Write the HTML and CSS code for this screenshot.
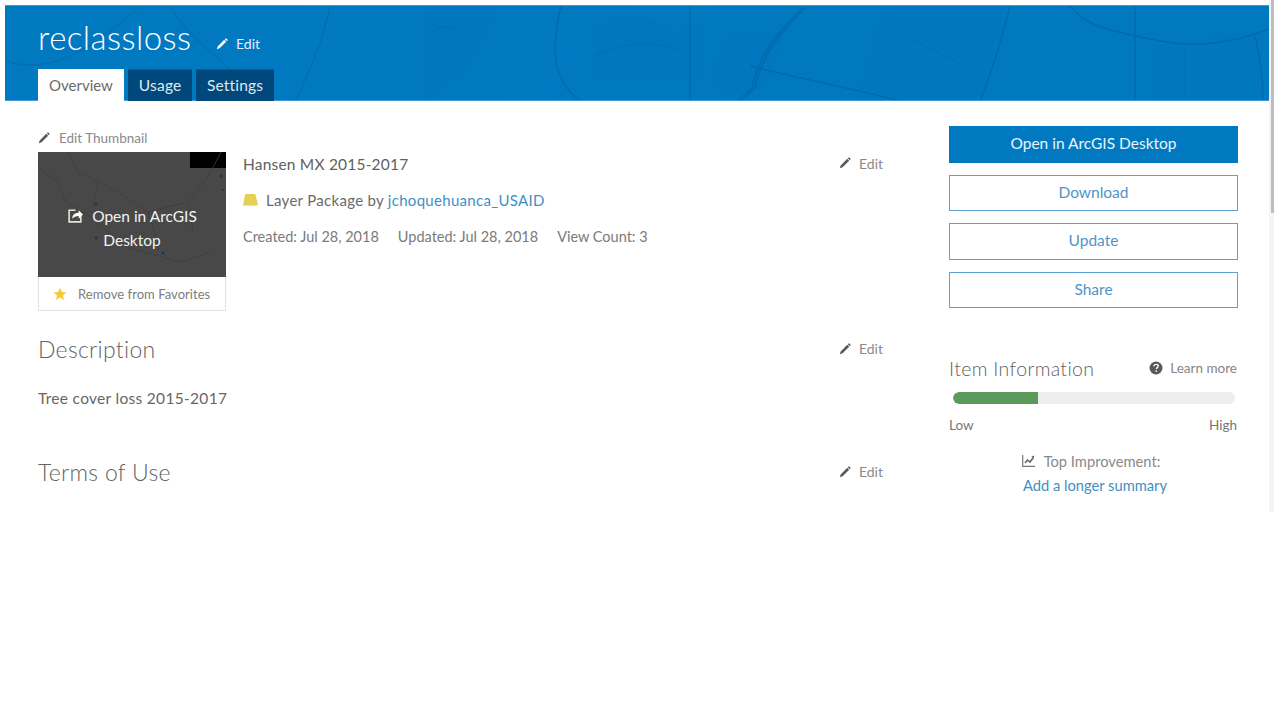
FILE: index.html
```html
<!DOCTYPE html>
<html lang="en">
<head>
<meta charset="utf-8">
<title>reclassloss</title>
<link rel="stylesheet" href="styles.css">
</head>
<body>
<svg class="defs" width="0" height="0" aria-hidden="true">
  <symbol id="pencil" viewBox="0 0 14 14"><path d="M1 13l.9-3.200L9.600 2.100l2.300 2.300-7.700 7.700zM10.300 1.400l.8-.7c.4-.3.8-.3 1.100 0l1.100 1.100c.3.3.3.8 0 1.100l-.7.8z" fill="currentColor"/></symbol>
</svg>
<div class="screen">
  <div class="page">
    <header class="banner">
      <svg class="map-lines" viewBox="0 0 1264 95" preserveAspectRatio="none" aria-hidden="true">
        <g fill="#006fb3" fill-opacity=".14">
          <path d="M590 20c40-12 90-8 110 0v50c-40 0-90 10-110 0zM735 30c20-10 40-5 45 5l-25 50h-45l5-50zM420 0h75l-30 60-45 35z"/>
          <path d="M880 0h120l-30 95H850zM1150 40l105-15v70h-105z"/>
        </g>
        <g fill="#0a86cc" fill-opacity=".12">
          <path d="M625 0h85v18l-45 8zM300 0h60l-30 60h-50zM520 20c20-5 40 0 50 20l-30 55h-40z"/>
        </g>
        <g fill="none" stroke="#00558f" stroke-opacity=".4">
          <path d="M0 55C50 70 90 40 135 0M165 0c15 30 60 60 95 95M290 95c20-40 30-70 35-95" stroke-width="1"/>
          <path d="M556 0c-10 40-10 75 20 95M685 0v95" stroke-width="1.400"/>
          <path d="M800 2c-25 25-45 50-50 80l-15 13M797 2c-25 25-45 50-50 80l-15 13" stroke-width="1.400"/>
          <path d="M745 60c40 10 90 20 150 35M1005 0c-10 40-20 70-30 95M1065 0c15 20 40 25 90 35 40 8 80 0 109-12M1130 0v95M1250 30c5 20 8 40 8 65" stroke-width="1.400"/>
          <path d="M420 30c20-15 30-10 40 0M590 50c30-15 60-15 90-5M900 30l60 30M1180 40v55" stroke-opacity=".2"/>
        </g>
      </svg>
      <div class="title-row">
        <h1 class="title">reclassloss</h1>
        <a class="edit edit-light"><svg class="pencil"><use href="#pencil"/></svg>Edit</a>
      </div>
      <nav class="tabs">
        <a class="tab tab-active">Overview</a>
        <a class="tab">Usage</a>
        <a class="tab">Settings</a>
      </nav>
    </header>
    <div class="content">
      <main class="main">
        <section class="summary">
          <div class="thumb-col">
            <a class="edit-thumb"><svg class="pencil"><use href="#pencil"/></svg>Edit Thumbnail</a>
            <div class="thumb-card">
              <div class="thumb">
                <svg class="thumb-map" viewBox="0 0 188 125" aria-hidden="true">
                  <rect x="152" y="0" width="36" height="16" fill="#000"/>
                  <g fill="none" stroke="#3d3d3d" stroke-width=".8">
                    <path d="M0 15l20 15 8 20 25 15 35 30 55 15 30-10M30 0l10 20 20 10 20 10 30 20 40-10 20-25 13-25"/>
                    <path d="M60 30l-5 25M110 60l10 30M150 50l5 30"/>
                  </g>
                  <g fill="#1d3550">
                    <circle cx="58" cy="52" r="1.500"/><circle cx="62" cy="60" r="1.500"/><circle cx="58" cy="86" r="1.500"/><circle cx="125" cy="101" r="1.200"/><circle cx="183" cy="24" r="1.500"/><circle cx="185" cy="38" r="1"/>
                  </g>
                </svg>
                <a class="thumb-label">
                  <svg class="open-icon" viewBox="0 0 16 16" aria-hidden="true"><path d="M8 3H2v11h11V8" fill="none" stroke="#e8e4d8" stroke-width="1.500"/><path d="M5 11c0-3.500 2.500-5.500 6-5.500V3l4 4-4 4V8.500c-2.500 0-4.500.8-6 2.500z" fill="#fff"/></svg>Open in ArcGIS<br>Desktop
                </a>
              </div>
              <a class="favorite"><svg class="star" viewBox="0 0 14 14" aria-hidden="true"><path d="M7 .8l1.900 4.200 4.500.4-3.400 3 1 4.500L7 10.600l-4 2.300 1-4.500-3.400-3 4.500-.4z" fill="#f7c933"/></svg>Remove from Favorites</a>
            </div>
          </div>
          <div class="meta">
            <div class="meta-title">Hansen MX 2015-2017</div>
            <div class="meta-type"><svg class="pkg" viewBox="0 0 15 12" aria-hidden="true"><path d="M2 .5C2.200.2 2.500 0 3 0h8.500c.5 0 .8.300 1 .8L15 11c-5 1.300-10 .5-15 .5z" fill="#e6cf55"/></svg>Layer Package by <a class="link">jchoquehuanca_USAID</a></div>
            <div class="meta-dates"><span>Created: Jul 28, 2018</span><span>Updated: Jul 28, 2018</span><span>View Count: 3</span></div>
          </div>
          <a class="edit edit-summary"><svg class="pencil"><use href="#pencil"/></svg>Edit</a>
        </section>
        <section class="block block-desc">
          <div class="block-head"><h2>Description</h2><a class="edit"><svg class="pencil"><use href="#pencil"/></svg>Edit</a></div>
          <p class="desc">Tree cover loss 2015-2017</p>
        </section>
        <section class="block block-terms">
          <div class="block-head"><h2>Terms of Use</h2><a class="edit"><svg class="pencil"><use href="#pencil"/></svg>Edit</a></div>
        </section>
      </main>
      <aside class="side">
        <a class="btn btn-primary">Open in ArcGIS Desktop</a>
        <a class="btn">Download</a>
        <a class="btn">Update</a>
        <a class="btn">Share</a>
        <div class="info">
          <div class="info-head"><h3>Item Information</h3><a class="learn"><svg class="help" viewBox="0 0 14 14" aria-hidden="true"><circle cx="7" cy="7" r="6.500" fill="#595959"/><path d="M4.900 5.300c.1-1.300 1-1.900 2.200-1.900 1.300 0 2.100.7 2.100 1.700 0 1.500-1.800 1.500-1.800 3" fill="none" stroke="#fff" stroke-width="1.400"/><rect x="6.500" y="9.300" width="1.500" height="1.500" fill="#fff"/></svg>Learn more</a></div>
          <div class="meter"><div class="meter-fill" style="width:30%"></div></div>
          <div class="scale"><span>Low</span><span>High</span></div>
          <div class="improve">
            <div class="improve-label"><svg class="chart" viewBox="0 0 13 12" aria-hidden="true"><path d="M.7 0v11.300H13" fill="none" stroke="#777" stroke-width="1.200"/><path d="M3 8l2.500-3 2.500 2 3-4" fill="none" stroke="#666" stroke-width="1.600"/><path d="M9.500 1.500L12 .5V4z" fill="#666"/></svg>Top Improvement:</div>
            <a class="link">Add a longer summary</a>
          </div>
        </div>
      </aside>
    </div>
  </div>
  <div class="scrollbar"><div class="thumbbar"></div></div>
</div>
</body>
</html>
```

FILE: styles.css
```css
* { box-sizing: border-box; }
html, body { margin: 0; height: 100%; overflow: hidden; background: #fff; }
body { font-family: Lato, "Noto Sans", "Liberation Sans", sans-serif; color: #5c5c5c; font-size: 15px; }
.defs { position: absolute; }
h1, h2, h3, p { margin: 0; font-weight: 400; }
.screen { display: flex; align-items: flex-start; height: 720px; }
.page { width: 1269px; padding: 5px 0 0 5px; }
.scrollbar { width: 5px; height: 512px; background: #f4f4f4; padding-left: 2px; }
.thumbbar { width: 3px; height: 213px; background: #bdbdbd; }

.banner { position: relative; height: 96px; background: #0079c1; overflow: hidden; padding-left: 33px; border-top: 1px solid #4a94c6; }
.banner::after { content: ""; position: absolute; left: 0; right: 0; bottom: 0; height: 1px; background: #3f9bd6; }
.map-lines { position: absolute; inset: 0; width: 100%; height: 100%; }
.title-row { position: relative; display: flex; align-items: center; height: 63px; }
.title { color: #fff; font-size: 33px; font-weight: 300; line-height: 62px; letter-spacing: .45px; width: 178px; margin-top: -2px; }
.tabs { position: relative; z-index: 1; display: flex; gap: 3.500px; }
.tab { height: 32px; padding: 0 11px; line-height: 31px; background: #00487c; color: #dfe9f0; font-size: 15.500px; letter-spacing: .2px; border-top: 1px solid #005e98; }
.tab-active { background: #fff; color: #6b6b6b; font-size: 15px; letter-spacing: 0; padding: 0 11.500px 0 11px; line-height: 32px; border: 0; }

.edit { display: inline-flex; align-items: center; color: #8a8a8a; font-size: 14px; }
.edit .pencil { width: 12px; height: 12px; margin-right: 8px; color: #5a5a5a; }
.edit-light { color: #e4f0f8; margin-top: 12px; }
.edit-light .pencil { color: #fff; }

.content { display: flex; padding: 25px 0 0 33px; }
.main { width: 845px; flex: none; }
.summary { display: flex; position: relative; height: 186px; }
.thumb-col { width: 188px; flex: none; padding-top: 1px; }
.edit-thumb { display: flex; align-items: center; height: 22px; margin-bottom: 3px; font-size: 13.500px; color: #8a8a8a; }
.edit-thumb .pencil { width: 12px; height: 12px; margin-right: 9px; color: #5a5a5a; }
.thumb-card { border: 1px solid #e2e2e2; border-top: 0; height: 159px; }
.thumb { position: relative; height: 125px; margin: 0 -1px; background: #484848; color: #f2f2f2; display: flex; align-items: center; justify-content: center; }
.thumb-map { position: absolute; inset: 0; width: 100%; height: 100%; }
.thumb-label { position: relative; text-align: center; font-size: 15.500px; line-height: 24px; width: 150px; padding-top: 26px; }
.open-icon { width: 17px; height: 17px; margin-right: 8px; vertical-align: -2px; }
.favorite { display: flex; align-items: center; height: 33px; padding-left: 14px; font-size: 13px; letter-spacing: .05px; color: #7d7d7d; }
.star { width: 14px; height: 14px; margin-right: 11px; }

.meta { margin-left: 17px; padding-top: 28px; }
.meta-title { font-size: 15.500px; line-height: 20px; color: #5f5f5f; letter-spacing: .2px; }
.meta-type { margin-top: 16px; line-height: 21px; font-size: 15px; color: #6a6a6a; letter-spacing: .3px; display: flex; align-items: center; white-space: pre; }
.pkg { width: 15px; height: 12px; margin-right: 8px; margin-top: -2px; }
.link { color: #3f8fc4; }
.meta-dates { margin-top: 16px; font-size: 14.500px; line-height: 20px; color: #7a7a7a; display: flex; gap: 19px; }
.edit-summary { position: absolute; left: 801px; top: 27px; height: 20px; }

.block-head { display: flex; justify-content: space-between; align-items: center; height: 30px; }
.block-head h2 { font-size: 23px; font-weight: 300; color: #636363; letter-spacing: .3px; }
.desc { margin-top: 24.500px; font-size: 15.500px; line-height: 20px; color: #666; letter-spacing: .3px; }
.block-desc { height: 123px; margin-top: 21.500px; }

.side { width: 289px; margin-left: 66px; flex: none; }
.btn { display: flex; align-items: center; justify-content: center; height: 36.500px; margin-bottom: 12px; padding-bottom: 2px; border: 1.500px solid #5ba3d4; color: #4f94c9; font-size: 15.500px; background: #fff; }
.btn-primary { background: #0079c1; border-color: #0079c1; color: #eaf4fa; }
.info { margin-top: 47px; padding-right: 1px; }
.info-head { display: flex; justify-content: space-between; align-items: center; height: 26px; }
.info-head h3 { font-size: 19.500px; font-weight: 300; color: #5f5f5f; letter-spacing: .35px; }
.learn { display: flex; align-items: center; font-size: 13.500px; color: #858585; }
.help { width: 14px; height: 14px; margin-right: 7px; }
.meter { height: 12px; margin: 11px 2px 0 4px; border-radius: 6px; background: #eee; overflow: hidden; }
.meter-fill { height: 100%; background: #5a9a5a; border-radius: 6px 0 0 6px; }
.scale { display: flex; justify-content: space-between; margin-top: 12px; font-size: 13.500px; line-height: 18px; color: #767676; }
.improve { margin-top: 15px; text-align: center; font-size: 14.700px; line-height: 24px; padding-left: 4px; }
.improve-label { color: #8a8a8a; padding-right: 8px; }
.chart { width: 13px; height: 12px; margin-right: 9px; }
```
